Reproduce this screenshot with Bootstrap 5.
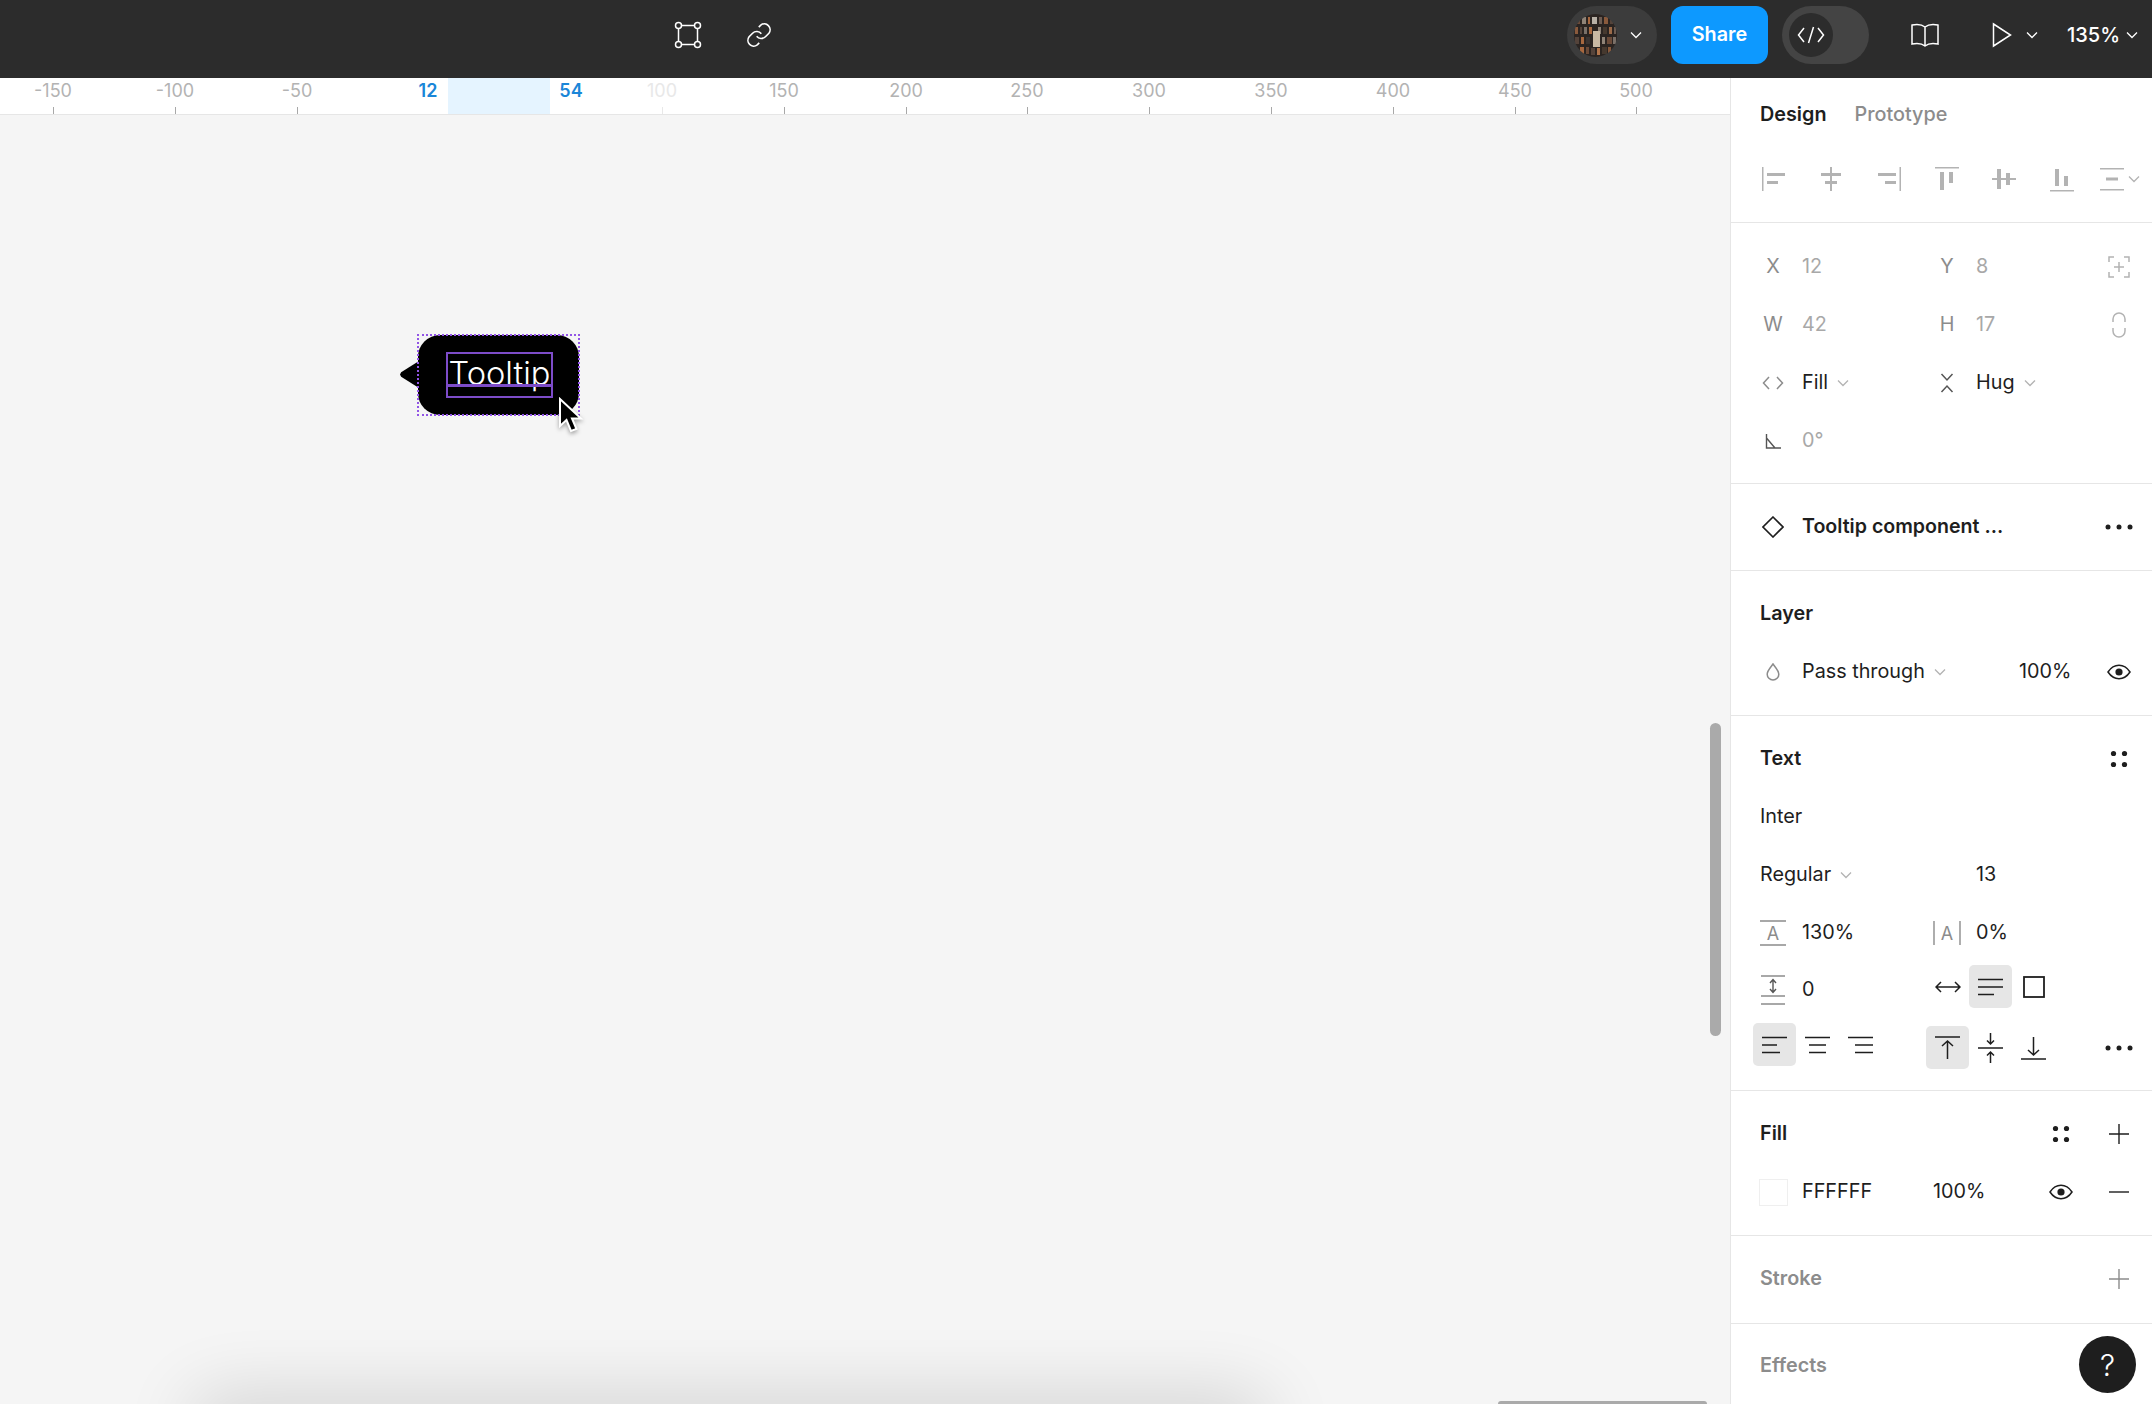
<!DOCTYPE html>
<html lang="en">
<head>
  <meta charset="UTF-8" />
  <title>Tooltip component</title>
  <link href="https://cdn.jsdelivr.net/npm/bootstrap@5.3.0/dist/css/bootstrap.min.css" rel="stylesheet" />
  <style>
    body { font-family: "Inter", "Liberation Sans", sans-serif; font-size: 19.8px; color: #1e1e1e; background: #f5f5f5; height: 100vh; overflow: hidden; }
    svg { display: block; flex: none; }

    /* top toolbar */
    .topbar { height: 78px; flex: none; background: #2c2c2c; color: #fff; padding: 0 14px 8px 674px; }
    .link-ico { margin-left: 43px; }
    .user-pill { width: 90px; height: 58px; border-radius: 29px; background: #3c3c3c; padding-left: 7px; gap: 13px; margin-left: auto; }
    .avatar { width: 43px; height: 43px; border-radius: 50%; overflow: hidden; }
    .avatar svg { filter: blur(.7px); }
    .share-btn { width: 97px; height: 58px; margin-left: 14px; border: 0; border-radius: 12px; background: #0d99ff; font-size: 19.8px; font-weight: 600; padding: 0; }
    .code-pill { width: 87px; height: 58px; border-radius: 29px; background: #444; padding-left: 7px; margin-left: 14px; }
    .code-knob { width: 44px; height: 44px; border-radius: 50%; background: #2c2c2c; }
    .book-ico { margin-left: 41px; }
    .play-ico { margin-left: 52px; }
    .play-caret { margin-left: 14px; }
    .zoom-val { margin-left: 29px; font-weight: 500; font-size: 20px; }
    .zoom-caret { margin-left: 6px; }

    /* ruler and canvas */
    .main-row { min-height: 0; }
    .ruler { height: 37px; flex: none; background: #fff; border-bottom: 1px solid #e6e6e6; }
    .ruler-sel { position: absolute; left: 448px; width: 102px; top: 0; bottom: 0; background: #e5f4ff; }
    .rlabel { position: absolute; top: 3px; line-height: 20px; font-size: 18px; color: #b3b3b3; transform: translateX(-50%); }
    .rlabel-faded { color: #e8e8e8; }
    .rlabel-sel { color: #1a86d8; font-weight: 600; }
    .rtick { position: absolute; bottom: 0; width: 1px; height: 7px; background: #a8a8a8; }
    .rtick-faded { background: #e8e8e8; }
    .stage { background: #f5f5f5; }

    .tip-body { position: absolute; left: 418px; top: 220px; width: 161px; height: 80px; background: #000; border-radius: 22px; }
    .tip-body::before { content: ""; position: absolute; left: -18px; top: 26px; width: 19px; height: 27px; background: #000; clip-path: polygon(100% 0, 100% 100%, 6% 58%, 0 50%, 6% 42%); }
    .tip-dash { position: absolute; inset: -1px; border: 2px dotted #9255e6; }
    .tip-frame { position: relative; width: 107px; height: 46px; margin-left: 28px; border: 2.5px solid #7d4cc9; color: #fff; font-size: 32.6px; font-weight: 300; line-height: 39px; text-align: center; white-space: nowrap; }
    .tip-base { position: absolute; left: 0; right: 0; top: 30px; height: 2.5px; background: #7d4cc9; }
    .cursor-ico { position: absolute; left: 558px; top: 282px; filter: drop-shadow(0 2px 2px rgba(0,0,0,.35)); }

    .vbar { position: absolute; left: 1710px; top: 608px; width: 11px; height: 313px; border-radius: 6px; background: #aaa; }
    .hbar { position: absolute; left: 1498px; bottom: 0; width: 209px; height: 3px; border-radius: 3px 3px 0 0; background: #aaa; }
    .drop-shade { position: absolute; left: 200px; width: 1060px; height: 40px; bottom: -46px; border-radius: 40px; box-shadow: 0 -4px 70px 12px rgba(0,0,0,.14); }

    /* right panel */
    .side { width: 422px; flex: none; background: #fff; border-left: 1px solid #e6e6e6; }
    .tabs { height: 73px; padding-left: 29px; gap: 28px; }
    .tab-on { font-weight: 600; }
    .tab-off { color: #8c8c8c; font-weight: 500; }
    .align-row { display: grid; grid-template-columns: repeat(6, 57.6px) auto; height: 55px; padding-left: 14px; align-items: center; justify-items: center; color: #b3b3b3; margin-bottom: 16px; }
    .align-last { justify-self: start; margin-left: 9px; gap: 4px; }
    .sect { border-bottom: 1px solid #e6e6e6; padding: 14px 0 14px; }
    .sect-tabs { padding: 0; }
    .sect-geom { padding: 15px 0 13px; }
    .sect-end-12 { padding-bottom: 12px; }
    .sect-end-15 { padding-bottom: 15px; }
    .sect-last { border: 0; padding-top: 13px; }
    .prow { display: grid; grid-template-columns: 50px 124px 50px 64px 46px 12px 44px; height: 58px; padding-left: 21px; align-items: center; }
    .ico { width: 42px; display: flex; justify-content: center; align-items: center; color: #8c8c8c; }
    .ico-dark { color: #1e1e1e; }
    .txt-dim { color: #a8a8a8; }
    .head { grid-column: 1 / 3; margin-left: 8px; font-weight: 600; }
    .plain { grid-column: 1 / 3; margin-left: 8px; }
    .head-off { color: #8c8c8c; }
    .span-name { grid-column: 2 / 5; font-size: 19.6px; }
    .span-blend { grid-column: 2 / 4; }
    .in-c3 { grid-column: 3; }
    .in-c4 { grid-column: 4 / 8; }
    .in-c5 { grid-column: 5; }
    .in-c7 { grid-column: 7; }
    .pct-layer { grid-column: 4 / 6; margin-left: 43px; }
    .pct-fill { margin-left: 7px; white-space: nowrap; }
    .caret-gap { gap: 9px; color: #b3b3b3; }
    .caret-gap span { color: #1e1e1e; }
    .swatch { width: 29px; height: 27px; margin-left: 7px; background: #fff; border: 1px solid #efefef; }
    .btn-trio { display: flex; }
    .tbtn { width: 43px; height: 43px; border-radius: 5px; display: flex; align-items: center; justify-content: center; color: #1e1e1e; }
    .tbtn-on { background: #e6e6e6; }
    .lift-9 { margin-bottom: 9px; }
    .lift-3 { margin-bottom: 3px; }
    .trio-left { grid-column: 1 / 3; margin-left: 1px; }
    .trio-right { grid-column: 3 / 7; }
    .help-btn { position: absolute; right: 16px; bottom: 11px; width: 57px; height: 57px; border-radius: 50%; background: #1e1e1e; color: #fff; font-size: 30px; font-weight: 300; line-height: 1; }
  </style>
</head>
<body class="d-flex flex-column position-relative">
  <svg width="0" height="0" class="position-absolute">
    <symbol id="chev" viewBox="0 0 12 8"><path d="M1 1.5 6 6.5 11 1.5" fill="none" stroke="currentColor" stroke-width="1.3"/></symbol>
    <symbol id="dots3" viewBox="0 0 28 6"><circle cx="3" cy="3" r="2.5" fill="currentColor"/><circle cx="14" cy="3" r="2.5" fill="currentColor"/><circle cx="25" cy="3" r="2.5" fill="currentColor"/></symbol>
    <symbol id="dots4" viewBox="0 0 18 18"><circle cx="3.5" cy="3.5" r="2.6" fill="currentColor"/><circle cx="14.5" cy="3.5" r="2.6" fill="currentColor"/><circle cx="3.5" cy="14.5" r="2.6" fill="currentColor"/><circle cx="14.5" cy="14.5" r="2.6" fill="currentColor"/></symbol>
    <symbol id="eye" viewBox="0 0 24 16"><path d="M1 8C5 2 9 1.3 12 1.3S19 2 23 8C19 14 15 14.7 12 14.7S5 14 1 8Z" fill="none" stroke="currentColor" stroke-width="1.5"/><circle cx="12" cy="8" r="3.6" fill="currentColor"/></symbol>
    <symbol id="plus" viewBox="0 0 20 20"><path d="M10 0V20M0 10H20" stroke="currentColor" stroke-width="1.4"/></symbol>
  </svg>

  <!-- top toolbar -->
  <header class="topbar d-flex align-items-center">
    <svg width="28" height="28" viewBox="0 0 28 28" fill="#2c2c2c" stroke="#fff" stroke-width="1.5">
      <rect x="4.5" y="4.5" width="19" height="19"/>
      <circle cx="4.5" cy="4.5" r="3"/><circle cx="23.5" cy="4.5" r="3"/><circle cx="4.5" cy="23.5" r="3"/><circle cx="23.5" cy="23.5" r="3"/>
    </svg>
    <svg class="link-ico" width="28" height="28" viewBox="0 0 24 24" fill="none" stroke="#fff" stroke-width="1.4">
      <path d="M10 13a5 5 0 0 0 7.5.5l3-3a5 5 0 0 0-7-7l-1.7 1.7"/><path d="M14 11a5 5 0 0 0-7.5-.5l-3 3a5 5 0 0 0 7 7l1.7-1.7"/>
    </svg>
    <div class="user-pill d-flex align-items-center">
      <div class="avatar">
        <svg width="43" height="43" viewBox="0 0 43 43">
          <rect width="43" height="43" fill="#2b2421"/>
          <rect x="3" y="4" width="3" height="6" fill="#6b4a38"/><rect x="8" y="3" width="4" height="7" fill="#8f8377"/><rect x="14" y="3" width="2" height="7" fill="#a8683f"/><rect x="18" y="3" width="5" height="7" fill="#b7b0a6"/><rect x="25" y="3" width="3" height="7" fill="#6d5c52"/><rect x="30" y="3" width="4" height="7" fill="#8a5a3c"/><rect x="36" y="4" width="3" height="6" fill="#54433a"/>
          <rect x="1" y="13" width="3" height="7" fill="#8a5a3c"/><rect x="6" y="13" width="2" height="7" fill="#54433a"/><rect x="10" y="13" width="3" height="7" fill="#7a7068"/><rect x="15" y="13" width="3" height="7" fill="#a8683f"/><rect x="24" y="13" width="3" height="7" fill="#8f8377"/><rect x="29" y="13" width="4" height="7" fill="#46392f"/><rect x="35" y="13" width="3" height="7" fill="#9c6a48"/><rect x="40" y="13" width="2" height="7" fill="#6d5c52"/>
          <rect x="19" y="17" width="7" height="16" fill="#c9b9a3"/>
          <rect x="1" y="23" width="4" height="7" fill="#54433a"/><rect x="7" y="23" width="3" height="7" fill="#a8683f"/><rect x="12" y="23" width="4" height="7" fill="#3b3431"/><rect x="28" y="23" width="3" height="7" fill="#8f8377"/><rect x="33" y="23" width="5" height="7" fill="#6b4a38"/><rect x="39" y="23" width="3" height="7" fill="#7a7068"/>
          <rect x="6" y="33" width="4" height="7" fill="#a8683f"/><rect x="12" y="33" width="3" height="7" fill="#6b4a38"/><rect x="17" y="34" width="4" height="7" fill="#54433a"/><rect x="23" y="34" width="3" height="7" fill="#b2754b"/><rect x="28" y="33" width="5" height="7" fill="#46392f"/><rect x="34" y="33" width="3" height="6" fill="#8a5a3c"/>
        </svg>
      </div>
      <svg width="12" height="8" class="text-white"><use href="#chev"/></svg>
    </div>
    <button type="button" class="btn btn-primary share-btn">Share</button>
    <div class="code-pill d-flex align-items-center">
      <div class="code-knob d-flex align-items-center justify-content-center">
        <svg width="28" height="18" viewBox="0 0 28 18" fill="none" stroke="#fff" stroke-width="1.5"><path d="M7 2 1.5 9 7 16M21 2 26.5 9 21 16M16.5 1 11.5 17"/></svg>
      </div>
    </div>
    <svg class="book-ico" width="30" height="28" viewBox="0 0 30 28" fill="none" stroke="#fff" stroke-width="1.5"><path d="M15 6C12 3.5 7 3 2 4V23C7 22 12 22.5 15 25 18 22.5 23 22 28 23V4C23 3 18 3.5 15 6ZM15 6V25"/></svg>
    <svg class="play-ico" width="20" height="26" viewBox="0 0 20 26" fill="none" stroke="#fff" stroke-width="1.5"><path d="M1.5 2 18.5 13 1.5 24Z"/></svg>
    <svg class="play-caret text-white" width="12" height="8"><use href="#chev"/></svg>
    <span class="zoom-val">135%</span>
    <svg class="zoom-caret text-white" width="12" height="8"><use href="#chev"/></svg>
  </header>

  <div class="main-row d-flex flex-grow-1">
    <!-- canvas column -->
    <main class="flex-grow-1 d-flex flex-column position-relative overflow-hidden">
      <div class="ruler position-relative">
        <div class="ruler-sel"></div>
        <span class="rlabel" style="left:53px">-150</span><i class="rtick" style="left:53px"></i>
        <span class="rlabel" style="left:175px">-100</span><i class="rtick" style="left:175px"></i>
        <span class="rlabel" style="left:297px">-50</span><i class="rtick" style="left:297px"></i>
        <span class="rlabel rlabel-sel" style="left:428px">12</span>
        <span class="rlabel rlabel-sel" style="left:571px">54</span>
        <span class="rlabel rlabel-faded" style="left:662px">100</span><i class="rtick rtick-faded" style="left:662px"></i>
        <span class="rlabel" style="left:784px">150</span><i class="rtick" style="left:784px"></i>
        <span class="rlabel" style="left:906px">200</span><i class="rtick" style="left:906px"></i>
        <span class="rlabel" style="left:1027px">250</span><i class="rtick" style="left:1027px"></i>
        <span class="rlabel" style="left:1149px">300</span><i class="rtick" style="left:1149px"></i>
        <span class="rlabel" style="left:1271px">350</span><i class="rtick" style="left:1271px"></i>
        <span class="rlabel" style="left:1393px">400</span><i class="rtick" style="left:1393px"></i>
        <span class="rlabel" style="left:1515px">450</span><i class="rtick" style="left:1515px"></i>
        <span class="rlabel" style="left:1636px">500</span><i class="rtick" style="left:1636px"></i>
      </div>
      <div class="stage flex-grow-1 position-relative">
        <div class="tip-body d-flex align-items-center">
          <div class="tip-dash"></div>
          <div class="tip-frame">Tooltip<div class="tip-base"></div></div>
        </div>
        <svg class="cursor-ico" width="26" height="38" viewBox="0 0 26 38"><path d="M2 2V29L8.5 23 13 34 18.5 32 14 21.5H23Z" fill="#000" stroke="#fff" stroke-width="2"/></svg>
        <div class="drop-shade"></div>
        <div class="vbar"></div>
        <div class="hbar"></div>
      </div>
    </main>

    <!-- properties panel -->
    <aside class="side">
      <div class="sect sect-tabs">
        <div class="tabs d-flex align-items-center"><span class="tab-on">Design</span><span class="tab-off">Prototype</span></div>
        <div class="align-row">
          <svg width="26" height="26" viewBox="0 0 26 26" fill="currentColor"><rect x="1" y="1" width="1.5" height="24"/><rect x="6" y="7" width="18" height="3"/><rect x="6" y="15" width="11" height="3"/></svg>
          <svg width="26" height="26" viewBox="0 0 26 26" fill="currentColor"><rect x="12" y="1" width="2" height="24"/><rect x="3" y="7" width="20" height="3"/><rect x="7" y="15" width="12" height="3"/></svg>
          <svg width="26" height="26" viewBox="0 0 26 26" fill="currentColor"><rect x="23.5" y="1" width="1.5" height="24"/><rect x="2" y="7" width="18" height="3"/><rect x="9" y="15" width="11" height="3"/></svg>
          <svg width="26" height="26" viewBox="0 0 26 26" fill="currentColor"><rect x="1" y="1" width="24" height="1.5"/><rect x="6" y="6" width="4" height="18"/><rect x="15" y="6" width="4" height="11"/></svg>
          <svg width="26" height="26" viewBox="0 0 26 26" fill="currentColor"><rect x="1" y="12" width="24" height="2"/><rect x="6" y="3" width="4" height="20"/><rect x="15" y="7" width="4" height="12"/></svg>
          <svg width="26" height="26" viewBox="0 0 26 26" fill="currentColor"><rect x="1" y="24" width="24" height="1.5"/><rect x="6" y="3" width="4" height="17"/><rect x="15" y="10" width="4" height="10"/></svg>
          <div class="align-last d-flex align-items-center">
            <svg width="24" height="24" viewBox="0 0 24 24" fill="currentColor"><rect y="1" width="24" height="1.5"/><rect y="22" width="24" height="1.5"/><rect x="6" y="10.5" width="12" height="3"/></svg>
            <svg width="12" height="8"><use href="#chev"/></svg>
          </div>
        </div>
      </div>

      <div class="sect sect-geom">
        <div class="prow">
          <div class="ico">X</div><div class="txt-dim">12</div>
          <div class="ico">Y</div><div class="txt-dim">8</div>
          <div class="ico in-c7"><svg width="22" height="22" viewBox="0 0 22 22" fill="none" stroke="#b3b3b3" stroke-width="1.5"><path d="M1 6V1H6M16 1H21V6M1 16V21H6M16 21H21V16M11 6V16M6 11H16"/></svg></div>
        </div>
        <div class="prow">
          <div class="ico">W</div><div class="txt-dim">42</div>
          <div class="ico">H</div><div class="txt-dim">17</div>
          <div class="ico in-c7"><svg width="14" height="26" viewBox="0 0 14 26" fill="none" stroke="#b3b3b3" stroke-width="1.5"><path d="M1 10V7a6 6 0 0 1 12 0V10M1 16V19a6 6 0 0 0 12 0V16"/></svg></div>
        </div>
        <div class="prow">
          <div class="ico"><svg width="22" height="14" viewBox="0 0 22 14" fill="none" stroke="#8c8c8c" stroke-width="1.5"><path d="M7 1 1.5 7 7 13M15 1 20.5 7 15 13"/></svg></div>
          <div class="d-flex align-items-center caret-gap"><span>Fill</span><svg width="12" height="8"><use href="#chev"/></svg></div>
          <div class="ico"><svg width="14" height="20" viewBox="0 0 14 20" fill="none" stroke="#555" stroke-width="1.5"><path d="M1.5 1 7 7 12.5 1M1.5 19 7 13 12.5 19"/></svg></div>
          <div class="in-c4 d-flex align-items-center caret-gap"><span>Hug</span><svg width="12" height="8"><use href="#chev"/></svg></div>
        </div>
        <div class="prow">
          <div class="ico"><svg width="16" height="16" viewBox="0 0 16 16" fill="none" stroke="#555" stroke-width="1.4"><path d="M1.5 1V15H16M1.5 5 10 15"/></svg></div>
          <div class="txt-dim">0°</div>
        </div>
      </div>

      <div class="sect">
        <div class="prow">
          <div class="ico ico-dark"><svg width="22" height="22" viewBox="0 0 22 22" fill="none" stroke="currentColor" stroke-width="1.6"><path d="M11 1 21 11 11 21 1 11Z"/></svg></div>
          <div class="span-name fw-semibold text-nowrap">Tooltip component ...</div>
          <div class="ico in-c7 ico-dark"><svg width="28" height="6"><use href="#dots3"/></svg></div>
        </div>
      </div>

      <div class="sect">
        <div class="prow"><div class="head">Layer</div></div>
        <div class="prow">
          <div class="ico"><svg width="14" height="18" viewBox="0 0 14 18" fill="none" stroke="#8c8c8c" stroke-width="1.5"><path d="M7 1C5 4 1.2 7.5 1.2 11.2a5.8 5.8 0 0 0 11.6 0C12.8 7.5 9 4 7 1Z"/></svg></div>
          <div class="span-blend d-flex align-items-center caret-gap text-nowrap"><span>Pass through</span><svg width="12" height="8"><use href="#chev"/></svg></div>
          <div class="pct-layer">100%</div>
          <div class="ico in-c7 ico-dark"><svg width="24" height="16"><use href="#eye"/></svg></div>
        </div>
      </div>

      <div class="sect sect-end-12">
        <div class="prow">
          <div class="head">Text</div>
          <div class="ico in-c7 ico-dark"><svg width="18" height="18"><use href="#dots4"/></svg></div>
        </div>
        <div class="prow"><div class="plain">Inter</div></div>
        <div class="prow">
          <div class="plain d-flex align-items-center caret-gap"><span>Regular</span><svg width="12" height="8"><use href="#chev"/></svg></div>
          <div class="in-c4">13</div>
        </div>
        <div class="prow">
          <div class="ico"><svg width="26" height="26" viewBox="0 0 26 26"><path d="M0 1H26M0 25H26" stroke="#8c8c8c" stroke-width="1.4"/><text x="13" y="19.5" text-anchor="middle" font-size="18" fill="#8c8c8c" font-family="Inter">A</text></svg></div>
          <div>130%</div>
          <div class="ico"><svg width="28" height="24" viewBox="0 0 28 24"><path d="M1 0V24M27 0V24" stroke="#8c8c8c" stroke-width="1.4"/><text x="14" y="18.5" text-anchor="middle" font-size="18" fill="#8c8c8c" font-family="Inter">A</text></svg></div>
          <div class="in-c4">0%</div>
        </div>
        <div class="prow">
          <div class="ico lift-3"><svg width="24" height="30" viewBox="0 0 24 30" fill="none" stroke="#8c8c8c" stroke-width="1.4"><path d="M0 1H24M0 21H24M0 29H24"/><path d="M12 5V17M9 8 12 4.5 15 8M9 14 12 17.5 15 14" stroke="#555"/></svg></div>
          <div class="lift-3">0</div>
          <div class="btn-trio trio-right lift-9">
            <div class="tbtn"><svg width="26" height="14" viewBox="0 0 26 14" fill="none" stroke="currentColor" stroke-width="1.5"><path d="M1 7H25M6 2 1 7 6 12M20 2 25 7 20 12"/></svg></div>
            <div class="tbtn tbtn-on"><svg width="26" height="18" viewBox="0 0 26 18" fill="none" stroke="currentColor" stroke-width="1.6"><path d="M0 1.5H25M0 9H25M0 16.5H16"/></svg></div>
            <div class="tbtn"><svg width="22" height="22" viewBox="0 0 22 22" fill="none" stroke="currentColor" stroke-width="1.8"><rect x="1" y="1" width="20" height="20"/></svg></div>
          </div>
        </div>
        <div class="prow">
          <div class="btn-trio trio-left lift-9">
            <div class="tbtn tbtn-on"><svg width="26" height="18" viewBox="0 0 26 18" fill="none" stroke="currentColor" stroke-width="1.6"><path d="M0 1.5H25M0 9H15M0 16.5H18"/></svg></div>
            <div class="tbtn"><svg width="26" height="18" viewBox="0 0 26 18" fill="none" stroke="currentColor" stroke-width="1.6"><path d="M0 1.5H25M4 9H21M4 16.5H21"/></svg></div>
            <div class="tbtn"><svg width="26" height="18" viewBox="0 0 26 18" fill="none" stroke="currentColor" stroke-width="1.6"><path d="M0 1.5H25M7 9H25M7 16.5H25"/></svg></div>
          </div>
          <div class="btn-trio trio-right lift-3">
            <div class="tbtn tbtn-on"><svg width="26" height="24" viewBox="0 0 26 24" fill="none" stroke="currentColor" stroke-width="1.5"><path d="M0 1H25M12.5 23V5M7 10 12.5 5 18 10"/></svg></div>
            <div class="tbtn"><svg width="26" height="30" viewBox="0 0 26 30" fill="none" stroke="currentColor" stroke-width="1.5"><path d="M0 15H25M12.5 0V11M9 7.5 12.5 11 16 7.5M12.5 30V19M9 22.5 12.5 19 16 22.5"/></svg></div>
            <div class="tbtn"><svg width="26" height="24" viewBox="0 0 26 24" fill="none" stroke="currentColor" stroke-width="1.5"><path d="M0 23H25M12.5 1V19M7 14 12.5 19 18 14"/></svg></div>
          </div>
          <div class="ico in-c7 ico-dark lift-3"><svg width="28" height="6"><use href="#dots3"/></svg></div>
        </div>
      </div>

      <div class="sect">
        <div class="prow">
          <div class="head">Fill</div>
          <div class="ico in-c5 ico-dark"><svg width="18" height="18"><use href="#dots4"/></svg></div>
          <div class="ico in-c7 ico-dark"><svg width="20" height="20"><use href="#plus"/></svg></div>
        </div>
        <div class="prow">
          <div class="swatch"></div>
          <div>FFFFFF</div>
          <div class="in-c3 pct-fill">100%</div>
          <div class="ico in-c5 ico-dark"><svg width="24" height="16"><use href="#eye"/></svg></div>
          <div class="ico in-c7 ico-dark"><svg width="20" height="20" viewBox="0 0 20 20"><path d="M0 10H20" stroke="currentColor" stroke-width="1.4"/></svg></div>
        </div>
      </div>

      <div class="sect sect-end-15">
        <div class="prow">
          <div class="head head-off">Stroke</div>
          <div class="ico in-c7"><svg width="20" height="20"><use href="#plus"/></svg></div>
        </div>
      </div>

      <div class="sect sect-last">
        <div class="prow"><div class="head head-off">Effects</div></div>
      </div>
    </aside>
  </div>

  <div class="help-btn d-flex align-items-center justify-content-center">?</div>
  <script src="https://cdn.jsdelivr.net/npm/bootstrap@5.3.0/dist/js/bootstrap.bundle.min.js"></script>
</body>
</html>
